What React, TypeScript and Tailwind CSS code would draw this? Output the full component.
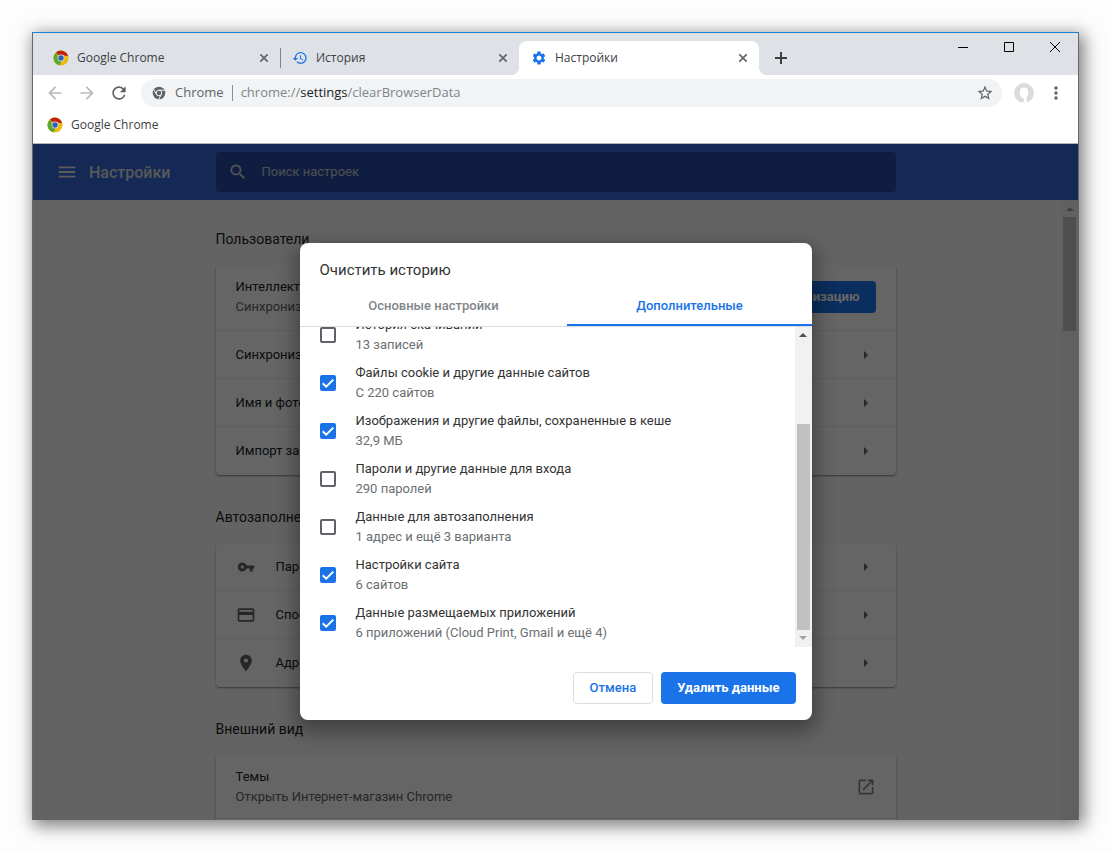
import type { ReactNode } from "react";
import {
  MdArrowBack,
  MdArrowForward,
  MdCreditCard,
  MdHistory,
  MdMenu,
  MdMoreVert,
  MdOpenInNew,
  MdPlace,
  MdRefresh,
  MdSearch,
  MdSettings,
  MdStarBorder,
  MdVpnKey,
} from "react-icons/md";

const dataTypes = [
  { id: "downloads", title: "История скачиваний", info: "13 записей", checked: false },
  { id: "cookies", title: "Файлы cookie и другие данные сайтов", info: "С 220 сайтов", checked: true },
  { id: "cache", title: "Изображения и другие файлы, сохраненные в кеше", info: "32,9 МБ", checked: true },
  { id: "passwords", title: "Пароли и другие данные для входа", info: "290 паролей", checked: false },
  { id: "autofill", title: "Данные для автозаполнения", info: "1 адрес и ещё 3 варианта", checked: false },
  { id: "sites", title: "Настройки сайта", info: "6 сайтов", checked: true },
  { id: "apps", title: "Данные размещаемых приложений", info: "6 приложений (Cloud Print, Gmail и ещё 4)", checked: true },
];

function ChromeLogo() {
  return (
    <svg viewBox="0 0 16 16" className="size-4 shrink-0" aria-hidden="true">
      <circle cx="8" cy="8" r="7.5" fill="#efbb10" />
      <path d="M8 8 3 2.400A7.500 7.500 0 0 1 15.200 6.200L8 5Z" fill="#c3210f" />
      <path d="M3 2.400A7.500 7.500 0 0 0 6.600 15.350L9.500 10 8 8 5.300 7Z" fill="#5fa82c" />
      <circle cx="8" cy="8" r="3.400" fill="#dfe9f5" />
      <circle cx="8" cy="8" r="2.700" fill="#2c62b0" />
    </svg>
  );
}

function ChromeMono() {
  return (
    <svg viewBox="0 0 24 24" className="size-4 shrink-0" aria-hidden="true">
      <circle cx="12" cy="12" r="9.5" fill="#5f6368" />
      <circle cx="12" cy="12" r="4.2" fill="none" stroke="#f1f3f4" strokeWidth="1.5" />
      <path d="M12 7.8h9M8.4 14.1 4 6.4M15.6 14.1l-4.4 7.7" stroke="#f1f3f4" strokeWidth="1.5" />
    </svg>
  );
}

function Triangle({ className, points }: { className: string; points: string }) {
  return (
    <svg viewBox="0 0 8 8" className={className} fill="currentColor" aria-hidden="true">
      <polygon points={points} />
    </svg>
  );
}

const UP = "0,6 4,2 8,6";
const DOWN = "0,2 8,2 4,6";
const RIGHT = "2,0 6,4 2,8";

function Tab({ icon, title, active = false }: { icon: ReactNode; title: string; active?: boolean }) {
  return (
    <div
      className={
        active
          ? "relative flex w-60 items-center gap-2 rounded-t-lg bg-white px-3 before:absolute before:bottom-0 before:-left-2 before:size-2 before:bg-[radial-gradient(circle_at_0_0,transparent_8px,white_8px)] after:absolute after:-right-2 after:bottom-0 after:size-2 after:bg-[radial-gradient(circle_at_100%_0,transparent_8px,white_8px)]"
          : "flex w-[239px] items-center gap-2 px-3"
      }
    >
      {icon}
      <span className="flex-1 truncate">{title}</span>
      <button aria-label={"Закрыть " + title} className="text-[#5f6368]">
        <svg viewBox="0 0 8 8" className="size-2" stroke="currentColor" strokeWidth="1.600">
          <path d="M.3.3l7.400 7.400M7.700.3.3 7.700" />
        </svg>
      </button>
    </div>
  );
}

function TitleBar() {
  return (
    <div className="flex h-[42px] shrink-0 justify-between bg-[#dee1e6] text-xs text-[#3c4043]">
      <div className="flex min-w-0 pt-2 pl-2">
        <Tab icon={<ChromeLogo />} title="Google Chrome" />
        <div className="-mr-px h-5 w-px self-center bg-[#808387]" />
        <Tab icon={<MdHistory size={16} className="text-[#1a73e8]" />} title="История" />
        <Tab icon={<MdSettings size={16} className="text-[#1a73e8]" />} title="Настройки" active />
        <button aria-label="Новая вкладка" className="flex w-11 items-center justify-center text-[#3c4043]">
          <svg viewBox="0 0 12 12" className="size-3" stroke="currentColor" strokeWidth="2">
            <path d="M6 0v12M0 6h12" />
          </svg>
        </button>
      </div>
      <div className="flex h-7 text-black">
        <button aria-label="Свернуть" className="flex w-[46px] items-center justify-center">
          <svg viewBox="0 0 10 10" className="size-[10px]" stroke="currentColor">
            <path d="M0 5.5h10" />
          </svg>
        </button>
        <button aria-label="Развернуть" className="flex w-[46px] items-center justify-center">
          <svg viewBox="0 0 10 10" className="size-[10px]" stroke="currentColor" fill="none">
            <path d="M.5.5h9v9h-9z" />
          </svg>
        </button>
        <button aria-label="Закрыть" className="flex w-[46px] items-center justify-center">
          <svg viewBox="0 0 10 10" className="size-[10px]" stroke="currentColor">
            <path d="M0 0l10 10M10 0 0 10" />
          </svg>
        </button>
      </div>
    </div>
  );
}

function Toolbar() {
  return (
    <div className="shrink-0 border-b border-[#b6b6b9] bg-white">
      <div className="flex h-9 items-center px-[6px] text-[#5f6368]">
        <button aria-label="Назад" className="flex w-8 justify-center text-[#bababa]">
          <MdArrowBack size={20} />
        </button>
        <button aria-label="Вперёд" className="flex w-8 justify-center text-[#bababa]">
          <MdArrowForward size={20} />
        </button>
        <button aria-label="Обновить" className="flex w-8 justify-center">
          <MdRefresh size={20} />
        </button>
        <div className="mx-[6px] flex h-7 min-w-0 flex-1 items-center rounded-full bg-[#f1f3f4] pr-2 pl-[10px] text-[13px]">
          <ChromeMono />
          <span className="ml-2">Chrome</span>
          <div className="mx-2 h-4 w-px bg-[#8b8e91]" />
          <div
            role="textbox"
            aria-label="Адресная строка"
            contentEditable
            suppressContentEditableWarning
            className="flex-1 truncate text-[#80868b]"
          >
            chrome://<span className="text-[#202124]">settings</span>/clearBrowserData
          </div>
          <button aria-label="Добавить в закладки">
            <MdStarBorder size={18} />
          </button>
        </div>
        <button aria-label="Профиль" className="flex w-8 justify-center">
          <svg viewBox="0 0 20 20" className="size-5">
            <circle cx="10" cy="10" r="10" fill="#dadbdc" />
            <path d="M10 4.500c2.800 0 4.300 2 4.300 4.900 0 2.300-.7 4-1.700 5.100-.2 1.900 0 3.500.4 5.100L8.300 20c1.400-1.300 2-2.700 1.700-4.300-2.900-.6-4.300-3.200-4.300-6.300 0-2.900 1.500-4.900 4.300-4.900Z" fill="#fff" />
          </svg>
        </button>
        <button aria-label="Меню Chrome" className="flex w-8 justify-center">
          <MdMoreVert size={20} />
        </button>
      </div>
      <div className="flex h-8 px-[14px] pb-1 text-xs text-[#3c4043]">
        <a href="#chrome" className="flex items-center gap-2">
          <ChromeLogo />
          Google Chrome
        </a>
      </div>
    </div>
  );
}

function Section({ title, children }: { title: string; children: ReactNode }) {
  return (
    <section className="mb-8">
      <h2 className="mb-4 text-sm leading-5">{title}</h2>
      <div className="divide-y divide-[#ececec] rounded bg-[#fdfdfd] shadow-[0_1px_2px_rgba(0,0,0,0.45)]">{children}</div>
    </section>
  );
}

function LinkRow({ icon, label }: { icon?: ReactNode; label: string }) {
  return (
    <button className="flex h-12 w-full items-center gap-5 px-5 text-left">
      {icon && <span className="flex w-5 justify-center text-[#5f6368]">{icon}</span>}
      <span className="flex-1">{label}</span>
      <span className="flex w-5 justify-center text-[#5f6368]">
        <Triangle className="size-2" points={RIGHT} />
      </span>
    </button>
  );
}

function SettingsPage() {
  return (
    <div className="flex h-full flex-col bg-[#f8f8f8] text-[13px] leading-5 text-[#202124]">
      <header className="grid h-14 shrink-0 grid-cols-[1fr_minmax(0,680px)_1fr] items-center bg-[#3367d6] text-white">
        <div className="flex items-center gap-3 pl-6">
          <button aria-label="Главное меню" className="text-[#e6e6e6]">
            <MdMenu size={22} className="-mx-px" />
          </button>
          <h1 className="pt-px text-base font-medium text-[#dcdcdc]">Настройки</h1>
        </div>
        <label className="flex h-10 items-center gap-[14px] rounded-sm bg-black/25 px-3 text-[#d0d4d8]">
          <MdSearch size={20} className="shrink-0" />
          <input
            type="search"
            placeholder="Поиск настроек"
            aria-label="Поиск настроек"
            className="w-full bg-transparent outline-none placeholder:text-[#c0c4cc]"
          />
        </label>
      </header>
      <div className="grid min-h-0 flex-1 grid-cols-[1fr_minmax(0,680px)_1fr] overflow-hidden">
        <div />
        <main className="pt-[29px]">
          <Section title="Пользователи">
            <div className="flex h-[66px] items-center justify-between px-5 pb-px">
              <div>
                <div>Интеллектуальные функции Google в Chrome</div>
                <div className="text-[#5f6368]">Синхронизация и персонализация в Chrome</div>
              </div>
              <button className="h-8 rounded bg-[#1a73e8] px-4 font-bold text-white">Включить синхронизацию</button>
            </div>
            <LinkRow label="Синхронизация сервисов Google" />
            <LinkRow label="Имя и фото в Chrome" />
            <LinkRow label="Импорт закладок и настроек" />
          </Section>
          <Section title="Автозаполнение">
            <LinkRow icon={<MdVpnKey size={18} />} label="Пароли" />
            <LinkRow icon={<MdCreditCard size={20} />} label="Способы оплаты" />
            <LinkRow icon={<MdPlace size={20} />} label="Адреса и другие данные" />
          </Section>
          <Section title="Внешний вид">
            <a href="#themes" className="flex h-16 items-center justify-between px-5">
              <span>
                <span className="block">Темы</span>
                <span className="block text-[#5f6368]">Открыть Интернет-магазин Chrome</span>
              </span>
              <MdOpenInNew size={20} className="text-[#80868b]" />
            </a>
            <div className="h-16" />
          </Section>
        </main>
        <div className="flex w-[17px] flex-col items-center justify-self-end bg-[#f1f1f1]">
          <div className="flex h-[17px] items-center text-[#a3a3a3]">
            <Triangle className="size-2" points={UP} />
          </div>
          <div className="h-[114px] w-[13px] bg-[#c5c5c8]" />
          <div className="mt-auto flex h-[17px] items-center text-[#505050]">
            <Triangle className="size-2" points={DOWN} />
          </div>
        </div>
      </div>
    </div>
  );
}

function ClearHistoryDialog() {
  return (
    <div
      role="dialog"
      aria-labelledby="dialog-title"
      className="w-full max-w-lg overflow-hidden rounded-lg bg-white text-[13px] leading-5 text-[#333] shadow-[0_8px_20px_4px_rgba(0,0,0,0.35)]"
    >
      <h2 id="dialog-title" className="px-5 pt-4 pb-[5px] text-[15px] leading-[22px]">
        Очистить историю
      </h2>
      <div role="tablist" className="flex h-[41px] border-b border-[#dadce0] font-medium">
        <button role="tab" aria-selected="false" className="flex-auto text-[#80868b]">
          Основные настройки
        </button>
        <button role="tab" aria-selected="true" className="flex-auto border-b-2 border-[#1a73e8] pt-[2px] text-[#1a73e8]">
          Дополнительные
        </button>
      </div>
      <div className="flex h-80">
        {/* list is scrolled to its end, so the first row is cut at the top */}
        <div className="flex min-w-0 flex-1 flex-col justify-end overflow-hidden pl-5">
          {dataTypes.map((item) => (
            <label key={item.id} className="flex h-12 shrink-0 items-center gap-5">
              <span className="relative size-4">
                <input
                  type="checkbox"
                  defaultChecked={item.checked}
                  className="peer block size-4 appearance-none rounded-xs border-2 border-[#5f6368] checked:border-[#1a73e8] checked:bg-[#1a73e8]"
                />
                <svg
                  viewBox="0 0 16 16"
                  className="pointer-events-none absolute inset-0 hidden size-4 peer-checked:block"
                  fill="none"
                  stroke="#fff"
                  strokeWidth="2"
                >
                  <path d="M2.700 8.300 6.200 11.700 13.300 4.600" />
                </svg>
              </span>
              <span>
                <span className="block">{item.title}</span>
                <span className="block text-[#6b6f73]">{item.info}</span>
              </span>
            </label>
          ))}
        </div>
        <div className="flex w-[17px] flex-col items-center justify-between bg-[#f1f1f1]">
          <div className="flex h-[17px] items-center text-[#505050]">
            <Triangle className="size-2" points={UP} />
          </div>
          <div className="mt-auto h-[206px] w-[13px] bg-[#c1c1c1]" />
          <div className="flex h-[17px] items-center text-[#a3a3a3]">
            <Triangle className="size-2" points={DOWN} />
          </div>
        </div>
      </div>
      <div className="flex justify-end gap-2 px-4 pt-[25px] pb-4">
        <button className="h-8 rounded border border-[#dadce0] px-4 font-medium text-[#1a73e8]">Отмена</button>
        <button className="h-8 rounded bg-[#1a73e8] px-4 font-bold text-white">Удалить данные</button>
      </div>
    </div>
  );
}

export default function App() {
  return (
    <div className="h-screen bg-[#fdfdfd] p-8">
      <div className="flex h-full flex-col overflow-hidden border-x border-t border-x-[#66686b] border-t-[#1883d7] font-['Open_Sans','Noto_Sans',sans-serif] shadow-[3px_4px_16px_2px_rgba(0,0,0,0.5)]">
        <TitleBar />
        <Toolbar />
        <div className="relative min-h-0 flex-1 font-[Roboto,sans-serif]">
          <SettingsPage />
          <div className="absolute inset-0 flex items-center justify-center bg-black/60 pb-[2px]">
            <ClearHistoryDialog />
          </div>
        </div>
      </div>
    </div>
  );
}
